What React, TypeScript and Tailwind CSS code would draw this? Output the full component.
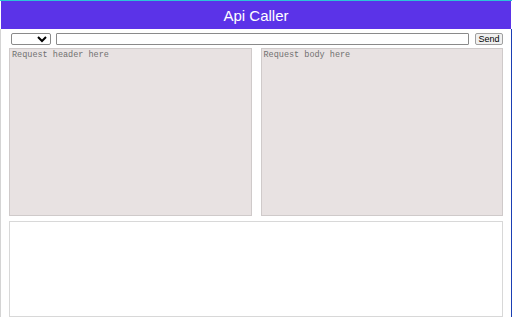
import React, { useState } from 'react';

const App: React.FC = () => {
    const [method, setMethod] = useState('');
    const [url, setUrl] = useState('');
    const [headers, setHeaders] = useState('');
    const [body, setBody] = useState('');

    return (
        <div className="w-[512px] h-[320px] overflow-hidden bg-white border-t border-t-[#2bc4d8] flex flex-col" style={{ fontFamily: '"Liberation Sans", Arial, sans-serif' }}>
            <div className="mx-px h-[28px] bg-[#5b33e8] flex items-center justify-center">
                <h1 className="text-white text-[15px] leading-none">Api Caller</h1>
            </div>
            <div className="flex-1 flex flex-col border-l border-l-[#d4d4d4] border-r border-r-[#1b3fb3] mb-[3px] px-[8px]">
                <div className="flex items-center gap-[5px] mt-[4px] pl-[2px] h-[12px]">
                    <select
                        value={method}
                        onChange={e => setMethod(e.target.value)}
                        className="w-[40px] h-[12px] border border-[#8a8a8a] rounded-[2px] bg-white text-[8px]"
                    >
                        <option value=""></option>
                        <option value="GET">GET</option>
                        <option value="POST">POST</option>
                    </select>
                    <input
                        value={url}
                        onChange={e => setUrl(e.target.value)}
                        className="flex-1 h-[12px] border border-[#8a8a8a] rounded-[1px] bg-white"
                    />
                    <button className="ml-[1px] w-[28px] h-[12px] border border-[#a0a0a0] rounded-[2px] bg-[#f0f0f0] text-[9px] leading-none text-black">
                        Send
                    </button>
                </div>
                <div className="flex gap-[9px] mt-[3px] h-[168px]">
                    <textarea
                        value={headers}
                        onChange={e => setHeaders(e.target.value)}
                        placeholder="Request header here"
                        className="flex-1 resize-none bg-[#e8e2e2] border border-[#cfcaca] px-[2px] py-[1px] text-[8.5px] leading-tight placeholder:text-[#707070]"
                        style={{ fontFamily: '"Liberation Mono", "Courier New", monospace' }}
                    />
                    <textarea
                        value={body}
                        onChange={e => setBody(e.target.value)}
                        placeholder="Request body here"
                        className="flex-1 resize-none bg-[#e8e2e2] border border-[#cfcaca] px-[2px] py-[1px] text-[8.5px] leading-tight placeholder:text-[#707070]"
                        style={{ fontFamily: '"Liberation Mono", "Courier New", monospace' }}
                    />
                </div>
                <div className="mt-[5px] flex-1 border border-[#d8d8d8] bg-white"></div>
            </div>
        </div>
    );
};

export default App;
